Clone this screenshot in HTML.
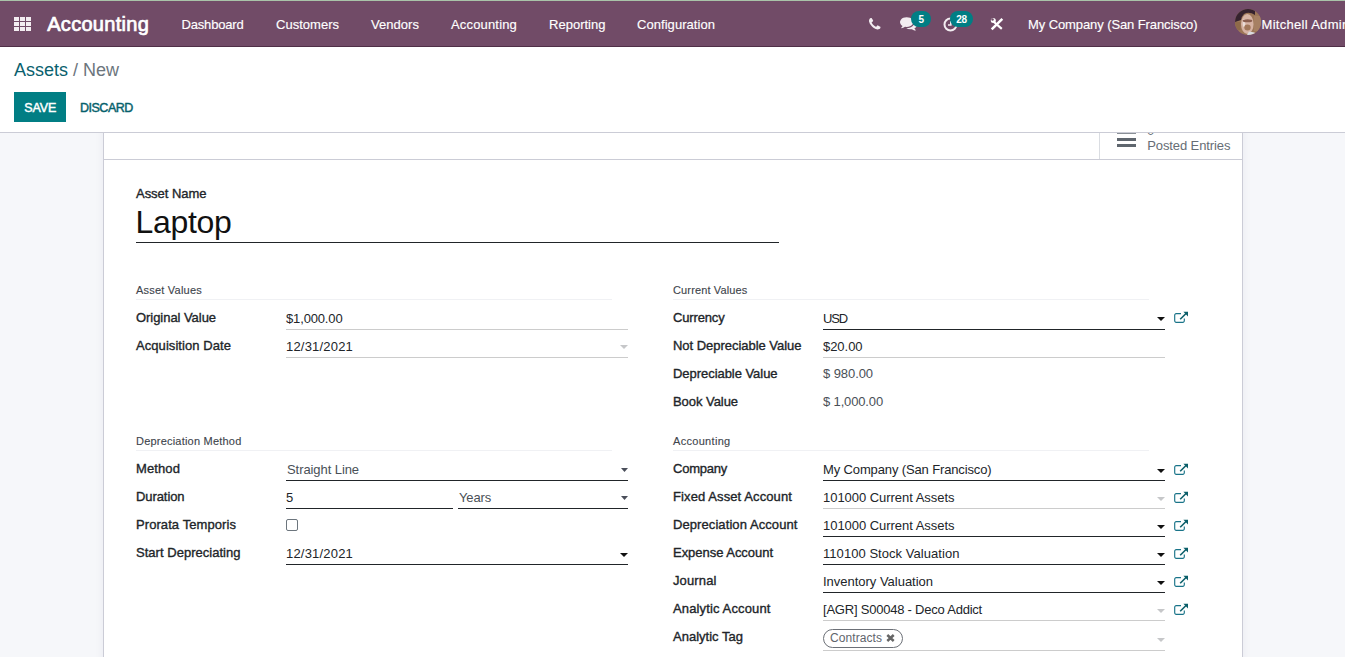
<!DOCTYPE html>
<html><head><meta charset="utf-8"><title>Assets / New</title>
<style>
*{box-sizing:border-box;margin:0;padding:0}
html,body{width:1345px;height:657px;overflow:hidden;background:#f6f7fa;font-family:"Liberation Sans",sans-serif}
body{position:relative}
.t{position:absolute;white-space:nowrap}
.r{position:absolute;display:block}
</style></head><body>
<div class="r" style="left:0px;top:0px;width:1345px;height:1px;background:#a9c3a9;"></div>
<div class="r" style="left:0px;top:1px;width:1345px;height:45px;background:#714b67;"></div>
<div class="r" style="left:0px;top:46px;width:1345px;height:1px;background:#4f2f47;"></div>
<div class="r" style="left:14px;top:17px;width:5px;height:4px;background:#f3edf1;"></div>
<div class="r" style="left:20px;top:17px;width:5px;height:4px;background:#f3edf1;"></div>
<div class="r" style="left:26px;top:17px;width:5px;height:4px;background:#f3edf1;"></div>
<div class="r" style="left:14px;top:22px;width:5px;height:4px;background:#f3edf1;"></div>
<div class="r" style="left:20px;top:22px;width:5px;height:4px;background:#f3edf1;"></div>
<div class="r" style="left:26px;top:22px;width:5px;height:4px;background:#f3edf1;"></div>
<div class="r" style="left:14px;top:27px;width:5px;height:4px;background:#f3edf1;"></div>
<div class="r" style="left:20px;top:27px;width:5px;height:4px;background:#f3edf1;"></div>
<div class="r" style="left:26px;top:27px;width:5px;height:4px;background:#f3edf1;"></div>
<span class="t" style="left:47.2px;top:9.87px;font-size:20px;line-height:28px;color:#fff;letter-spacing:0.304px;-webkit-text-stroke:0.7px #fff;">Accounting</span>
<span class="t" style="left:181.5px;top:15.50px;font-size:13px;line-height:18px;color:#fff;letter-spacing:-0.178px;-webkit-text-stroke:0.15px #fff;">Dashboard</span>
<span class="t" style="left:276px;top:15.50px;font-size:13px;line-height:18px;color:#fff;letter-spacing:0.017px;-webkit-text-stroke:0.15px #fff;">Customers</span>
<span class="t" style="left:371px;top:15.50px;font-size:13px;line-height:18px;color:#fff;letter-spacing:0.042px;-webkit-text-stroke:0.15px #fff;">Vendors</span>
<span class="t" style="left:451px;top:15.50px;font-size:13px;line-height:18px;color:#fff;letter-spacing:0.168px;-webkit-text-stroke:0.15px #fff;">Accounting</span>
<span class="t" style="left:549px;top:15.50px;font-size:13px;line-height:18px;color:#fff;letter-spacing:0.015px;-webkit-text-stroke:0.15px #fff;">Reporting</span>
<span class="t" style="left:637px;top:15.50px;font-size:13px;line-height:18px;color:#fff;letter-spacing:0.052px;-webkit-text-stroke:0.15px #fff;">Configuration</span>
<span class="t" style="left:1028px;top:15.50px;font-size:13px;line-height:18px;color:#fff;letter-spacing:-0.094px;-webkit-text-stroke:0.15px #fff;">My Company (San Francisco)</span>
<span class="t" style="left:1261.5px;top:15.50px;font-size:13px;line-height:18px;color:#fff;letter-spacing:0.299px;-webkit-text-stroke:0.15px #fff;">Mitchell Admin</span>
<svg class="r" style="left:869px;top:18px" width="11.5" height="11.5" viewBox="0 0 1408 1408"><path fill="#f3edf1" d="M1408 1112q0 27-10 70.500t-21 68.500q-21 50-122 106-94 51-186 51-27 0-53-3.500t-57.500-12.500-47-14.500-55.500-20.500-49-18q-98-35-175-83-127-79-264-216t-216-264q-48-77-83-175-3-9-18-49t-20.500-55.500-14.500-47-12.500-57.500-3.500-53q0-92 51-186 56-101 106-122 25-11 68.500-21t70.500-10q14 0 21 3 18 6 53 76 11 19 30 54t35 63.500 31 53.500q3 4 17.500 25t21.500 35.500 7 28.500q0 20-28.500 50t-62 55-62 53-28.500 46q0 9 5 22.500t8.500 20.500 14 24 11.500 19q76 137 174 235t235 174q2 1 19 11.500t24 14 20.500 8.500 22.500 5q18 0 46-28.500t53-62 55-62 50-28.500q14 0 28.500 7t35.500 21.500 25 17.500q25 15 53.500 31t63.500 35 54 30q70 35 76 53 3 7 3 21z"/></svg>
<svg class="r" style="left:900px;top:17px" width="17" height="15" viewBox="0 0 1792 1536"><path fill="#f3edf1" d="M1408 512q0 139-94 257t-256.500 186.500-353.500 68.500q-86 0-176-16-124 88-278 128-36 9-86 16h-3q-11 0-20.500-8t-11.500-21q-1-3-1-6.500t.5-6.500 2-6l2.500-5 3.500-5.500 4-5 4.500-5 4-4.500q5-6 23-25t26-29.500 22.500-29 25-38.500 20.500-44q-124-72-195-177t-71-224q0-139 94-257t256.500-186.500 353.500-68.500 353.500 68.500 256.500 186.500 94 257zm384 256q0 120-71 224.500t-195 176.500q10 24 20.500 44t25 38.500 22.500 29 26 29.500 23 25q1 1 4 4.500t4.500 5 4 5 3.500 5.500l2.500 5 2 6 .5 6.500-1 6.500q-3 14-13 22t-22 7q-50-7-86-16-154-40-278-128-90 16-176 16-271 0-472-132 58 4 88 4 161 0 309-45t264-129q125-92 192-212t67-254q0-77-23-152 129 71 204 178t75 230z"/></svg>
<div class="r" style="left:911px;top:11px;width:20px;height:16px;border-radius:8px;background:#017e84"></div>
<span class="t" style="left:918.6px;top:12.84px;font-size:10px;line-height:14px;color:#fff;font-weight:bold;">5</span>
<svg class="r" style="left:943px;top:17px" width="15" height="15" viewBox="0 0 15 15"><circle cx="7.500" cy="7.500" r="6" fill="none" stroke="#f3edf1" stroke-width="2"/><path d="M7.800 4v4H5" fill="none" stroke="#f3edf1" stroke-width="1.600"/></svg>
<div class="r" style="left:950px;top:11px;width:23px;height:16px;border-radius:8px;background:#017e84"></div>
<span class="t" style="left:956.3px;top:12.84px;font-size:10px;line-height:14px;color:#fff;font-weight:bold;letter-spacing:-0.262px;">28</span>
<svg class="r" style="left:990px;top:17px" width="14" height="14" viewBox="0 0 14 14"><path d="M1.700 12.300L12.300 1.900" stroke="#fff" stroke-width="2.500"/><path d="M4 5L11.800 11.800" stroke="#fff" stroke-width="2.200"/><circle cx="3.300" cy="3.600" r="2.500" fill="#fff"/><circle cx="2.500" cy="2.500" r="1.250" fill="#714b67"/></svg>
<svg class="r" style="left:1235px;top:9px" width="26" height="26" viewBox="0 0 26 26"><defs><clipPath id="av"><circle cx="13" cy="13" r="13"/></clipPath><filter id="bl" x="-20%" y="-20%" width="140%" height="140%"><feGaussianBlur stdDeviation="0.450"/></filter></defs><g clip-path="url(#av)"><rect width="26" height="26" fill="#9c7657"/><g filter="url(#bl)"><path d="M0 0H20V6Q14 2 9 5Q6 8 6 11L0 13Z" fill="#35202e"/><ellipse cx="12.300" cy="15" rx="6.300" ry="10" fill="#d6b3a4"/><ellipse cx="9" cy="14" rx="1.300" ry="4" fill="#eadcd6"/><ellipse cx="12.500" cy="11.800" rx="4.800" ry="1.500" fill="#8b5f50"/><ellipse cx="12.500" cy="18.500" rx="3.200" ry="3" fill="#a1775a"/><path d="M12 26L14 22.500L19.500 23.500L21 26Z" fill="#d9dbe0"/><rect x="19" y="7" width="7" height="15" fill="#a68063"/><rect x="0" y="13" width="5.500" height="8" fill="#8f6b4a"/></g></g></svg>
<div class="r" style="left:0px;top:47px;width:1345px;height:85px;background:#fff;"></div>
<div class="r" style="left:0px;top:132px;width:1345px;height:1px;background:#cbccd6;"></div>
<span class="t" style="left:14px;top:57.76px;font-size:18px;line-height:25px;color:#0a5f6e;">Assets</span>
<span class="t" style="left:73px;top:57.76px;font-size:18px;line-height:25px;color:#6c757d;">/ New</span>
<div class="r" style="left:14px;top:92px;width:52px;height:30px;background:#017e84;"></div>
<span class="t" style="left:24.2px;top:98.67px;font-size:12.5px;line-height:18px;color:#fff;letter-spacing:-0.106px;-webkit-text-stroke:0.45px #fff;">SAVE</span>
<span class="t" style="left:80px;top:98.67px;font-size:12.5px;line-height:18px;color:#06616c;letter-spacing:-0.494px;-webkit-text-stroke:0.45px #06616c;">DISCARD</span>
<div class="r" style="left:0;top:133px;width:1345px;height:524px;overflow:hidden"><div class="r" style="left:103px;top:-20px;width:1140px;height:580px;background:#fff;border-left:1px solid #cbccd6;border-right:1px solid #cbccd6;box-shadow:0 0 9px rgba(40,40,80,.06)"></div></div>
<div class="r" style="left:104px;top:159px;width:1138px;height:1px;background:#cbccd6;"></div>
<div class="r" style="left:1099px;top:133px;width:1px;height:26px;background:#dadde2;"></div>
<div class="r" style="left:1117px;top:133px;width:19px;height:1px;background:#8a9096;"></div>
<div class="r" style="left:1117px;top:138px;width:19px;height:3px;background:#5f666e;"></div>
<div class="r" style="left:1117px;top:144px;width:19px;height:3px;background:#5f666e;"></div>
<div class="r" style="left:1101px;top:133px;width:141px;height:26px;overflow:hidden"><span class="t" style="left:46px;top:-11.5px;font-size:13px;line-height:18px;color:#666d75">0</span></div>
<span class="t" style="left:1147.3px;top:136.50px;font-size:13px;line-height:18px;color:#666d75;letter-spacing:-0.110px;">Posted Entries</span>
<span class="t" style="left:136px;top:184.80px;font-size:13px;line-height:18px;color:#212529;letter-spacing:-0.030px;-webkit-text-stroke:0.35px #212529;">Asset Name</span>
<span class="t" style="left:135.5px;top:200.11px;font-size:32px;line-height:45px;color:#111;letter-spacing:-0.313px;">Laptop</span>
<div class="r" style="left:136px;top:242px;width:643px;height:1px;background:#212529;"></div>
<span class="t" style="left:136px;top:282.69px;font-size:11px;line-height:15px;color:#40454c;letter-spacing:0.218px;-webkit-text-stroke:0.12px #40454c;">Asset Values</span>
<div class="r" style="left:136px;top:299px;width:476px;height:1px;background:#f0f1f4;"></div>
<span class="t" style="left:673px;top:282.69px;font-size:11px;line-height:15px;color:#40454c;letter-spacing:0.139px;-webkit-text-stroke:0.12px #40454c;">Current Values</span>
<div class="r" style="left:673px;top:299px;width:476px;height:1px;background:#f0f1f4;"></div>
<span class="t" style="left:136px;top:433.69px;font-size:11px;line-height:15px;color:#40454c;letter-spacing:0.210px;-webkit-text-stroke:0.12px #40454c;">Depreciation Method</span>
<div class="r" style="left:136px;top:450px;width:476px;height:1px;background:#f0f1f4;"></div>
<span class="t" style="left:673px;top:433.69px;font-size:11px;line-height:15px;color:#40454c;letter-spacing:0.307px;-webkit-text-stroke:0.12px #40454c;">Accounting</span>
<div class="r" style="left:673px;top:450px;width:476px;height:1px;background:#f0f1f4;"></div>
<span class="t" style="left:136px;top:308.50px;font-size:13px;line-height:18px;color:#212529;letter-spacing:-0.049px;-webkit-text-stroke:0.35px #212529;">Original Value</span>
<span class="t" style="left:286px;top:309.50px;font-size:13px;line-height:18px;color:#212529;letter-spacing:-0.148px;">$1,000.00</span>
<div class="r" style="left:286px;top:329px;width:342px;height:1px;background:#cccccc;"></div>
<span class="t" style="left:136px;top:336.50px;font-size:13px;line-height:18px;color:#212529;letter-spacing:0.066px;-webkit-text-stroke:0.35px #212529;">Acquisition Date</span>
<span class="t" style="left:286px;top:337.50px;font-size:13px;line-height:18px;color:#212529;letter-spacing:0.194px;">12/31/2021</span>
<div class="r" style="left:286px;top:357px;width:342px;height:1px;background:#cccccc;"></div>
<svg class="r" style="left:620px;top:345px" width="8" height="4" viewBox="0 0 8 4"><path d="M0 0H8L4.0 4Z" fill="#c6c7c9"/></svg>
<span class="t" style="left:673px;top:308.50px;font-size:13px;line-height:18px;color:#212529;letter-spacing:-0.155px;-webkit-text-stroke:0.35px #212529;">Currency</span>
<span class="t" style="left:823px;top:309.50px;font-size:13px;line-height:18px;color:#212529;letter-spacing:-1.149px;">USD</span>
<div class="r" style="left:823px;top:329px;width:342px;height:1px;background:#212529;"></div>
<svg class="r" style="left:1157px;top:317px" width="8" height="4" viewBox="0 0 8 4"><path d="M0 0H8L4.0 4Z" fill="#111"/></svg>
<svg class="r" style="left:1174px;top:311px" width="15" height="13" viewBox="0 0 15 13"><path d="M10.300 7.600V9.800a1.500 1.500 0 0 1-1.500 1.500H2.200A1.500 1.500 0 0 1 .700 9.800V4.100A1.500 1.500 0 0 1 2.200 2.600H7" fill="none" stroke="#1a7489" stroke-width="1.150"/><path d="M6.200 8.300L12.300 2.300" fill="none" stroke="#0b5f6a" stroke-width="1.600"/><path d="M9.400 .800H14V5.400Z" fill="#0b5f6a"/></svg>
<span class="t" style="left:673px;top:336.50px;font-size:13px;line-height:18px;color:#212529;letter-spacing:-0.029px;-webkit-text-stroke:0.35px #212529;">Not Depreciable Value</span>
<span class="t" style="left:823px;top:337.50px;font-size:13px;line-height:18px;color:#212529;letter-spacing:-0.044px;">$20.00</span>
<div class="r" style="left:823px;top:357px;width:342px;height:1px;background:#cccccc;"></div>
<span class="t" style="left:673px;top:364.50px;font-size:13px;line-height:18px;color:#212529;letter-spacing:-0.045px;-webkit-text-stroke:0.35px #212529;">Depreciable Value</span>
<span class="t" style="left:823px;top:364.50px;font-size:13px;line-height:18px;color:#495057;letter-spacing:-0.075px;">$ 980.00</span>
<span class="t" style="left:673px;top:392.50px;font-size:13px;line-height:18px;color:#212529;letter-spacing:-0.053px;-webkit-text-stroke:0.35px #212529;">Book Value</span>
<span class="t" style="left:823px;top:392.50px;font-size:13px;line-height:18px;color:#495057;letter-spacing:-0.145px;">$ 1,000.00</span>
<span class="t" style="left:136px;top:459.50px;font-size:13px;line-height:18px;color:#212529;letter-spacing:0.106px;-webkit-text-stroke:0.35px #212529;">Method</span>
<span class="t" style="left:287px;top:460.50px;font-size:13px;line-height:18px;color:#495057;letter-spacing:-0.076px;">Straight Line</span>
<div class="r" style="left:286px;top:480px;width:342px;height:1px;background:#212529;"></div>
<svg class="r" style="left:621px;top:468px" width="7" height="4" viewBox="0 0 7 4"><path d="M0 0H7L3.5 4Z" fill="#4a4e5a"/></svg>
<span class="t" style="left:136px;top:487.50px;font-size:13px;line-height:18px;color:#212529;letter-spacing:-0.080px;-webkit-text-stroke:0.35px #212529;">Duration</span>
<span class="t" style="left:286px;top:488.50px;font-size:13px;line-height:18px;color:#212529;">5</span>
<div class="r" style="left:286px;top:508px;width:167px;height:1px;background:#212529;"></div>
<span class="t" style="left:459px;top:488.50px;font-size:13px;line-height:18px;color:#495057;letter-spacing:-0.153px;">Years</span>
<div class="r" style="left:458px;top:508px;width:170px;height:1px;background:#212529;"></div>
<svg class="r" style="left:621px;top:496px" width="7" height="4" viewBox="0 0 7 4"><path d="M0 0H7L3.5 4Z" fill="#4a4e5a"/></svg>
<span class="t" style="left:136px;top:515.50px;font-size:13px;line-height:18px;color:#212529;letter-spacing:0.078px;-webkit-text-stroke:0.35px #212529;">Prorata Temporis</span>
<div class="r" style="left:286px;top:519px;width:12px;height:12px;border:1px solid #6c757d;border-radius:2px;background:#fff"></div>
<span class="t" style="left:136px;top:543.50px;font-size:13px;line-height:18px;color:#212529;letter-spacing:0.025px;-webkit-text-stroke:0.35px #212529;">Start Depreciating</span>
<span class="t" style="left:286px;top:544.50px;font-size:13px;line-height:18px;color:#212529;letter-spacing:0.194px;">12/31/2021</span>
<div class="r" style="left:286px;top:564px;width:342px;height:1px;background:#212529;"></div>
<svg class="r" style="left:620px;top:553px" width="8" height="4" viewBox="0 0 8 4"><path d="M0 0H8L4.0 4Z" fill="#111"/></svg>
<span class="t" style="left:673px;top:459.50px;font-size:13px;line-height:18px;color:#212529;letter-spacing:-0.234px;-webkit-text-stroke:0.35px #212529;">Company</span>
<span class="t" style="left:823px;top:460.50px;font-size:13px;line-height:18px;color:#212529;letter-spacing:-0.132px;">My Company (San Francisco)</span>
<div class="r" style="left:823px;top:480px;width:342px;height:1px;background:#212529;"></div>
<svg class="r" style="left:1157px;top:469px" width="8" height="4" viewBox="0 0 8 4"><path d="M0 0H8L4.0 4Z" fill="#111"/></svg>
<svg class="r" style="left:1174px;top:463px" width="15" height="13" viewBox="0 0 15 13"><path d="M10.300 7.600V9.800a1.500 1.500 0 0 1-1.500 1.500H2.200A1.500 1.500 0 0 1 .700 9.800V4.100A1.500 1.500 0 0 1 2.200 2.600H7" fill="none" stroke="#1a7489" stroke-width="1.150"/><path d="M6.200 8.300L12.300 2.300" fill="none" stroke="#0b5f6a" stroke-width="1.600"/><path d="M9.400 .800H14V5.400Z" fill="#0b5f6a"/></svg>
<span class="t" style="left:673px;top:487.50px;font-size:13px;line-height:18px;color:#212529;letter-spacing:0.102px;-webkit-text-stroke:0.35px #212529;">Fixed Asset Account</span>
<span class="t" style="left:823px;top:488.50px;font-size:13px;line-height:18px;color:#212529;letter-spacing:-0.036px;">101000 Current Assets</span>
<div class="r" style="left:823px;top:508px;width:342px;height:1px;background:#cccccc;"></div>
<svg class="r" style="left:1157px;top:497px" width="8" height="4" viewBox="0 0 8 4"><path d="M0 0H8L4.0 4Z" fill="#c6c7c9"/></svg>
<svg class="r" style="left:1174px;top:491px" width="15" height="13" viewBox="0 0 15 13"><path d="M10.300 7.600V9.800a1.500 1.500 0 0 1-1.500 1.500H2.200A1.500 1.500 0 0 1 .700 9.800V4.100A1.500 1.500 0 0 1 2.200 2.600H7" fill="none" stroke="#1a7489" stroke-width="1.150"/><path d="M6.200 8.300L12.300 2.300" fill="none" stroke="#0b5f6a" stroke-width="1.600"/><path d="M9.400 .800H14V5.400Z" fill="#0b5f6a"/></svg>
<span class="t" style="left:673px;top:515.50px;font-size:13px;line-height:18px;color:#212529;letter-spacing:0.082px;-webkit-text-stroke:0.35px #212529;">Depreciation Account</span>
<span class="t" style="left:823px;top:516.50px;font-size:13px;line-height:18px;color:#212529;letter-spacing:-0.036px;">101000 Current Assets</span>
<div class="r" style="left:823px;top:536px;width:342px;height:1px;background:#212529;"></div>
<svg class="r" style="left:1157px;top:525px" width="8" height="4" viewBox="0 0 8 4"><path d="M0 0H8L4.0 4Z" fill="#111"/></svg>
<svg class="r" style="left:1174px;top:519px" width="15" height="13" viewBox="0 0 15 13"><path d="M10.300 7.600V9.800a1.500 1.500 0 0 1-1.500 1.500H2.200A1.500 1.500 0 0 1 .700 9.800V4.100A1.500 1.500 0 0 1 2.200 2.600H7" fill="none" stroke="#1a7489" stroke-width="1.150"/><path d="M6.200 8.300L12.300 2.300" fill="none" stroke="#0b5f6a" stroke-width="1.600"/><path d="M9.400 .800H14V5.400Z" fill="#0b5f6a"/></svg>
<span class="t" style="left:673px;top:543.50px;font-size:13px;line-height:18px;color:#212529;letter-spacing:-0.031px;-webkit-text-stroke:0.35px #212529;">Expense Account</span>
<span class="t" style="left:823px;top:544.50px;font-size:13px;line-height:18px;color:#212529;letter-spacing:0.050px;">110100 Stock Valuation</span>
<div class="r" style="left:823px;top:564px;width:342px;height:1px;background:#212529;"></div>
<svg class="r" style="left:1157px;top:553px" width="8" height="4" viewBox="0 0 8 4"><path d="M0 0H8L4.0 4Z" fill="#111"/></svg>
<svg class="r" style="left:1174px;top:547px" width="15" height="13" viewBox="0 0 15 13"><path d="M10.300 7.600V9.800a1.500 1.500 0 0 1-1.500 1.500H2.200A1.500 1.500 0 0 1 .700 9.800V4.100A1.500 1.500 0 0 1 2.200 2.600H7" fill="none" stroke="#1a7489" stroke-width="1.150"/><path d="M6.200 8.300L12.300 2.300" fill="none" stroke="#0b5f6a" stroke-width="1.600"/><path d="M9.400 .800H14V5.400Z" fill="#0b5f6a"/></svg>
<span class="t" style="left:673px;top:571.50px;font-size:13px;line-height:18px;color:#212529;letter-spacing:0.123px;-webkit-text-stroke:0.35px #212529;">Journal</span>
<span class="t" style="left:823px;top:572.50px;font-size:13px;line-height:18px;color:#212529;letter-spacing:-0.017px;">Inventory Valuation</span>
<div class="r" style="left:823px;top:592px;width:342px;height:1px;background:#212529;"></div>
<svg class="r" style="left:1157px;top:581px" width="8" height="4" viewBox="0 0 8 4"><path d="M0 0H8L4.0 4Z" fill="#111"/></svg>
<svg class="r" style="left:1174px;top:575px" width="15" height="13" viewBox="0 0 15 13"><path d="M10.300 7.600V9.800a1.500 1.500 0 0 1-1.500 1.500H2.200A1.500 1.500 0 0 1 .700 9.800V4.100A1.500 1.500 0 0 1 2.200 2.600H7" fill="none" stroke="#1a7489" stroke-width="1.150"/><path d="M6.200 8.300L12.300 2.300" fill="none" stroke="#0b5f6a" stroke-width="1.600"/><path d="M9.400 .800H14V5.400Z" fill="#0b5f6a"/></svg>
<span class="t" style="left:673px;top:599.50px;font-size:13px;line-height:18px;color:#212529;letter-spacing:0.132px;-webkit-text-stroke:0.35px #212529;">Analytic Account</span>
<span class="t" style="left:823px;top:600.50px;font-size:13px;line-height:18px;color:#212529;letter-spacing:-0.221px;">[AGR] S00048 - Deco Addict</span>
<div class="r" style="left:823px;top:620px;width:342px;height:1px;background:#cccccc;"></div>
<svg class="r" style="left:1157px;top:609px" width="8" height="4" viewBox="0 0 8 4"><path d="M0 0H8L4.0 4Z" fill="#c6c7c9"/></svg>
<svg class="r" style="left:1174px;top:603px" width="15" height="13" viewBox="0 0 15 13"><path d="M10.300 7.600V9.800a1.500 1.500 0 0 1-1.500 1.500H2.200A1.500 1.500 0 0 1 .700 9.800V4.100A1.500 1.500 0 0 1 2.200 2.600H7" fill="none" stroke="#1a7489" stroke-width="1.150"/><path d="M6.200 8.300L12.300 2.300" fill="none" stroke="#0b5f6a" stroke-width="1.600"/><path d="M9.400 .800H14V5.400Z" fill="#0b5f6a"/></svg>
<span class="t" style="left:673px;top:627.50px;font-size:13px;line-height:18px;color:#212529;letter-spacing:0.012px;-webkit-text-stroke:0.35px #212529;">Analytic Tag</span>
<div class="r" style="left:823px;top:629px;width:80px;height:19px;border:1px solid #6c7077;border-radius:9.5px;background:#fff"></div>
<span class="t" style="left:830px;top:629.64px;font-size:12px;line-height:17px;color:#5f656c;letter-spacing:0.072px;">Contracts</span>
<svg class="r" style="left:886px;top:634px" width="9" height="8" viewBox="0 0 9 8"><path d="M1.300 1L7.700 7M7.700 1L1.300 7" stroke="#666" stroke-width="2.500"/></svg>
<div class="r" style="left:823px;top:650px;width:342px;height:1px;background:#cccccc;"></div>
<svg class="r" style="left:1157px;top:638px" width="8" height="4" viewBox="0 0 8 4"><path d="M0 0H8L4.0 4Z" fill="#c6c7c9"/></svg>
</body></html>
